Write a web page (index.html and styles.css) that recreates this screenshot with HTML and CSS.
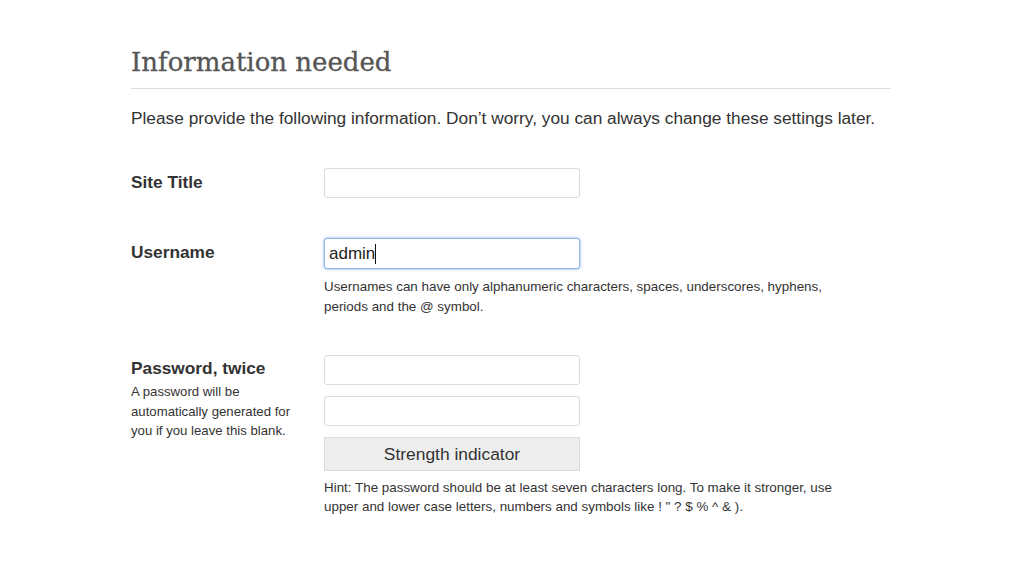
FILE: index.html
```
<!DOCTYPE html>
<html lang="en">
<head>
  <meta charset="UTF-8">
  <title>Information needed</title>
  <link rel="stylesheet" href="styles.css">
</head>
<body>
  <div class="page">
    <h1>Information needed</h1>
    <p class="intro">Please provide the following information. Don’t worry, you can always change these settings later.</p>

    <div class="form-row site-row">
      <label class="field-label" for="site-title">Site Title</label>
      <div class="field">
        <input type="text" id="site-title" class="text-input">
      </div>
    </div>

    <div class="form-row user-row">
      <label class="field-label" for="user-name">Username</label>
      <div class="field">
        <div class="text-input focused"><span>admin</span><span class="caret"></span></div>
        <p class="description">Usernames can have only alphanumeric characters, spaces, underscores, hyphens, periods and the @ symbol.</p>
      </div>
    </div>

    <div class="form-row pass-row">
      <div class="field-label">
        <label for="pass1">Password, twice</label>
        <p class="label-note">A password will be automatically generated for you if you leave this blank.</p>
      </div>
      <div class="field">
        <input type="password" id="pass1" class="text-input">
        <input type="password" id="pass2" class="text-input second">
        <div class="strength">Strength indicator</div>
        <p class="description hint">Hint: The password should be at least seven characters long. To make it stronger, use upper and lower case letters, numbers and symbols like ! " ? $ % ^ &amp; ).</p>
      </div>
    </div>
  </div>
</body>
</html>
```

FILE: styles.css
```
html, body {
  margin: 0;
  padding: 0;
  background: #fff;
  font-family: "Liberation Sans", Arial, sans-serif;
  color: #333;
}

.page {
  width: 760px;
  margin-left: 131px;
  padding-top: 44px;
}

h1 {
  margin: 0;
  padding-bottom: 8px;
  border-bottom: 1px solid #dedede;
  font-family: "DejaVu Serif", Georgia, serif;
  font-weight: normal;
  font-size: 26px;
  line-height: 36px;
  color: #555;
  -webkit-text-stroke: 0.3px #555;
}

.intro {
  margin: 18px 0 0;
  font-size: 17.3px;
  line-height: 22px;
  white-space: nowrap;
}

.form-row {
  display: grid;
  grid-template-columns: 193px 256px;
  align-items: start;
}

.site-row { margin-top: 39px; }
.user-row { margin-top: 40px; }
.pass-row { margin-top: 39px; }

.field-label {
  font-size: 17.3px;
  font-weight: bold;
  line-height: 20px;
  padding-top: 4px;
}

.pass-row .field-label {
  padding-top: 3px;
}

.label-note {
  margin: 4px 0 0;
  font-size: 13.2px;
  font-weight: normal;
  line-height: 19.5px;
  width: 170px;
}

.field {
  width: 256px;
}

.text-input {
  display: block;
  box-sizing: border-box;
  width: 256px;
  height: 30px;
  margin: 0;
  padding: 0 4px;
  border: 1px solid #dcdcdc;
  border-radius: 3px;
  background: #fff;
  font-family: "Liberation Sans", Arial, sans-serif;
  font-size: 17px;
  color: #222;
  outline: none;
}

.text-input.focused {
  display: flex;
  align-items: center;
  height: 31px;
  border: 1px solid #8fb4e0;
  box-shadow: 0 0 3px #7aa8e2;
}

.caret {
  display: inline-block;
  width: 1px;
  height: 20px;
  background: #111;
}

.text-input.second {
  margin-top: 11px;
}

.description {
  margin: 8px 0 0;
  width: 540px;
  font-size: 13.4px;
  line-height: 19.5px;
  color: #333;
}

.strength {
  box-sizing: border-box;
  width: 256px;
  height: 34px;
  margin-top: 11px;
  border: 1px solid #dcdcdc;
  background: #eee;
  font-size: 17.4px;
  line-height: 32px;
  text-align: center;
  color: #333;
}

.hint {
  margin-top: 7px;
  line-height: 19px;
}
```
